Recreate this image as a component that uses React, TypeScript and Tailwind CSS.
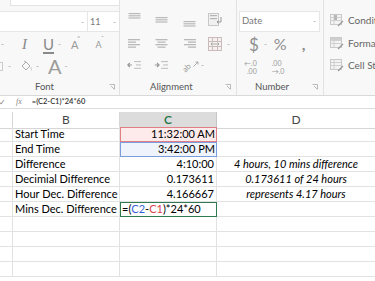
import React from "react";

const Dash = ({ className = "" }: { className?: string }) => (
  <span className={`text-[8px] leading-none text-[#9a9a9a] ${className}`}>-</span>
);

const Launcher = () => (
  <svg width="6" height="6" viewBox="0 0 6 6" className="text-[#aaa]">
    <path d="M0.5 0.5H5.5V5.5" fill="none" stroke="currentColor" strokeWidth="0.8" />
    <path d="M2 2L5 5" stroke="currentColor" strokeWidth="0.8" />
  </svg>
);

// horizontal line icons used by the alignment buttons
const Lines = ({ rows, widths, top = 0 }: { rows: number; widths: number[]; top?: number }) => (
  <svg width="13" height="14" viewBox="0 0 13 14">
    {Array.from({ length: rows }).map((_, i) => (
      <rect key={i} x={(13 - widths[i]) / 2} y={top + i * 2.2} width={widths[i]} height="1.2" fill="#b9b9b9" />
    ))}
  </svg>
);

const AlignIcon = ({ side }: { side: "left" | "center" | "right" }) => {
  const ws = [12, 8, 12, 8];
  return (
    <svg width="13" height="10" viewBox="0 0 13 10">
      {ws.map((w, i) => {
        const x = side === "left" ? 0 : side === "right" ? 13 - w : (13 - w) / 2;
        return <rect key={i} x={x} y={i * 2.5} width={w} height="1.3" fill="#b9b9b9" />;
      })}
    </svg>
  );
};

const Font = () => (
  <div className="flex w-[120px] shrink-0 flex-col border-r border-[#e2e2e2]">
    <div className="ml-[10px] h-[6px] border-b border-l border-[#e3e3e3] bg-white" />
    <div className="mt-[5px] flex h-[21px] border-y border-[#e6e6e6] bg-white">
      <div className="flex w-[87px] items-center justify-end pr-[3px]">
        <Dash />
      </div>
      <div className="flex flex-1 items-center border-l border-[#e6e6e6] pl-[2px] text-[9px] text-[#777]">
        <span>11</span>
        <span className="ml-auto pr-[3px]">
          <Dash />
        </span>
      </div>
    </div>
    <div className="mt-[4px] flex h-[16px] items-center text-[#888]">
      <Dash className="ml-[1px]" />
      <span className="ml-[18px] font-['Liberation_Serif'] text-[15px] italic leading-none text-[#888]">I</span>
      <span className="ml-[16px] text-[15px] leading-none text-[#8a8a8a] underline decoration-[1.5px] underline-offset-2">U</span>
      <Dash className="ml-[4px]" />
      <span className="relative ml-[10px] text-[11px] leading-none text-[#999]">
        A<span className="absolute -right-[2px] -top-[4px] text-[6px]">^</span>
      </span>
      <span className="relative ml-[17px] text-[9px] leading-none text-[#999]">
        A<span className="absolute -right-[2px] -top-[5px] text-[6px]">ˇ</span>
      </span>
    </div>
    <div className="mt-[5px] flex h-[18px] items-center">
      <div className="h-[9px] w-[3px] border-y border-r border-[#ccc]" />
      <Dash className="ml-[5px]" />
      <svg width="13" height="12" viewBox="0 0 13 12" className="ml-[9px]">
        <path d="M2 6L6 2L10 6L6 10Z" fill="none" stroke="#aaa" strokeWidth="1" />
        <path d="M4 1L6 2" stroke="#aaa" />
        <path d="M11 7C11 9 12 10 11.5 10.5" stroke="#ccc" fill="none" />
      </svg>
      <Dash className="ml-[3px]" />
      <span className="ml-[9px] text-[20px] leading-none text-[#9b9b9b]">A</span>
      <Dash className="ml-[3px]" />
    </div>
    <div className="mt-auto flex h-[14px] items-center pb-[2px]">
      <span className="ml-[35px] text-[9.5px] text-[#555]">Font</span>
      <span className="ml-auto mr-[4px]">
        <Launcher />
      </span>
    </div>
  </div>
);

const Alignment = () => (
  <div className="flex w-[117px] shrink-0 flex-col border-r border-[#e2e2e2]">
    <div className="mt-[13px] flex h-[16px] items-start pl-[8px]">
      <Lines rows={3} widths={[12, 12, 12]} />
      <span className="ml-[14px] mt-[4px]">
        <Lines rows={3} widths={[12, 12, 12]} />
      </span>
      <span className="ml-[15px] mt-[8px]">
        <Lines rows={3} widths={[12, 12, 12]} />
      </span>
      <svg width="15" height="14" viewBox="0 0 15 14" className="ml-[12px]">
        <rect x="0.5" y="0.5" width="10" height="12" fill="#f0f0f0" stroke="#c8c8c8" />
        <rect x="2" y="2" width="7" height="1.2" fill="#b5b5b5" />
        <rect x="2" y="5" width="7" height="1.2" fill="#b5b5b5" />
        <path d="M13 4V9H9M10.5 7.5L9 9L10.5 10.5" fill="none" stroke="#999" strokeWidth="1" />
      </svg>
    </div>
    <div className="mt-[7px] flex h-[16px] items-center pl-[8px]">
      <AlignIcon side="left" />
      <span className="ml-[14px]">
        <AlignIcon side="center" />
      </span>
      <span className="ml-[15px]">
        <AlignIcon side="right" />
      </span>
      <svg width="14" height="14" viewBox="0 0 14 14" className="ml-[12px]">
        <rect x="0.5" y="0.5" width="13" height="13" fill="#f5f0f0" stroke="#cbb" />
        <path d="M0.5 4.5H13.5M0.5 9.5H13.5M4.5 0.5V4.5M9.5 0.5V4.5M4.5 9.5V13.5M9.5 9.5V13.5" stroke="#cbb" />
        <path d="M3 7H11M4.5 5.5L3 7L4.5 8.5M9.5 5.5L11 7L9.5 8.5" fill="none" stroke="#999" strokeWidth="0.8" />
      </svg>
      <Dash className="ml-[5px]" />
    </div>
    <div className="mt-[5px] flex h-[16px] items-center pl-[7px] text-[#aaa]">
      <svg width="14" height="10" viewBox="0 0 14 10">
        <path d="M5 5H0.8M2.8 3L0.8 5L2.8 7" fill="none" stroke="#999" strokeWidth="1.2" />
        <rect x="7" y="1" width="7" height="1.1" fill="#c2c2c2" />
        <rect x="9" y="4.4" width="5" height="1.1" fill="#c2c2c2" />
        <rect x="7" y="7.8" width="7" height="1.1" fill="#c2c2c2" />
      </svg>
      <svg width="14" height="10" viewBox="0 0 14 10" className="ml-[13px]">
        <path d="M0.8 5H5M3 3L5 5L3 7" fill="none" stroke="#999" strokeWidth="1.2" />
        <rect x="7" y="1" width="7" height="1.1" fill="#c2c2c2" />
        <rect x="9" y="4.4" width="5" height="1.1" fill="#c2c2c2" />
        <rect x="7" y="7.8" width="7" height="1.1" fill="#c2c2c2" />
      </svg>
      <span className="relative ml-[13px] inline-block w-[16px] -rotate-45 text-[8px] leading-none text-[#999]">
        ab
      </span>
      <svg width="6" height="6" viewBox="0 0 6 6" className="-ml-[4px] -mt-[2px]">
        <path d="M0.5 5.5L5 1M2.5 1H5V3.5" fill="none" stroke="#999" strokeWidth="0.8" />
      </svg>
      <Dash className="ml-[2px]" />
    </div>
    <div className="mt-auto flex h-[14px] items-center pb-[2px]">
      <span className="ml-[30px] text-[9.5px] text-[#555]">Alignment</span>
      <span className="ml-auto mr-[5px]">
        <Launcher />
      </span>
    </div>
  </div>
);

const NumberGroup = () => (
  <div className="flex w-[87px] shrink-0 flex-col border-r border-[#e2e2e2]">
    <div className="ml-[2px] mr-[3px] mt-[11px] flex h-[21px] items-center border border-[#e6e6e6] bg-white pl-[2px] pr-[3px] text-[9.5px] text-[#777]">
      <span>Date</span>
      <span className="ml-auto">
        <Dash />
      </span>
    </div>
    <div className="mt-[2px] flex h-[20px] items-center text-[#8f8f8f]">
      <span className="ml-[12px] text-[17px] leading-none">$</span>
      <Dash className="ml-[5px]" />
      <span className="ml-[7px] text-[16px] leading-none">%</span>
      <span className="ml-[15px] text-[16px] font-bold leading-none">,</span>
    </div>
    <div className="mt-[3px] flex h-[20px] items-center text-[7px] leading-[8px] text-[#999]">
      <div className="ml-[7px] flex flex-col items-end">
        <span>←.0</span>
        <span>.00</span>
      </div>
      <div className="ml-[15px] flex flex-col items-start">
        <span>.00</span>
        <span>→.0</span>
      </div>
    </div>
    <div className="mt-auto flex h-[14px] items-center pb-[2px]">
      <span className="ml-[18px] text-[9.5px] text-[#555]">Number</span>
      <span className="ml-auto mr-[5px]">
        <Launcher />
      </span>
    </div>
  </div>
);

const StyleIcon = ({ kind }: { kind: number }) => (
  <svg width="14" height="13" viewBox="0 0 14 13" className="shrink-0">
    <rect x="0.5" y="0.5" width="11" height="10" fill="#f3f3f3" stroke="#c9c9c9" />
    <path d="M0.5 3.5H11.5M0.5 6.5H11.5M4 0.5V10.5" stroke="#d0d0d0" />
    {kind === 0 && <rect x="4" y="1" width="3" height="5" fill="#b8b8b8" />}
    {kind === 1 && <rect x="1" y="1" width="10" height="2.5" fill="#cfcfcf" />}
    <path d="M8 12L13 7" stroke="#999" strokeWidth="1.3" />
  </svg>
);

const Styles = () => (
  <div className="flex min-w-0 flex-1 flex-col overflow-hidden pl-[6px] text-[10px] text-[#666]">
    <div className="mt-[13px] flex h-[14px] items-center gap-[4px]">
      <StyleIcon kind={0} />
      <span className="whitespace-nowrap">Conditional</span>
    </div>
    <div className="mt-[9px] flex h-[14px] items-center gap-[4px]">
      <StyleIcon kind={1} />
      <span className="whitespace-nowrap">Format as</span>
    </div>
    <div className="mt-[8px] flex h-[14px] items-center gap-[4px]">
      <StyleIcon kind={2} />
      <span className="whitespace-nowrap">Cell Styles</span>
    </div>
  </div>
);

const grid = "border-b border-r border-[#e2e2e2]";

const rows: { b: string; c: string; d: string }[] = [
  { b: "Start Time", c: "11:32:00 AM", d: "" },
  { b: "End Time", c: "3:42:00 PM", d: "" },
  { b: "Difference", c: "4:10:00", d: "4 hours, 10 mins difference" },
  { b: "Decimial Difference", c: "0.173611", d: "0.173611 of 24 hours" },
  { b: "Hour Dec. Difference", c: "4.166667", d: "represents 4.17 hours" },
  { b: "Mins Dec. Difference", c: "", d: "" },
  { b: "", c: "", d: "" },
  { b: "", c: "", d: "" },
  { b: "", c: "", d: "" },
  { b: "", c: "", d: "" },
];

export default function App() {
  return (
    <div className="h-[281px] w-[375px] overflow-hidden bg-white font-['Lato',sans-serif] text-black">
      {/* ribbon */}
      <div className="flex h-[96px] border-b border-[#d9d9d9] bg-[#f8f8f8]">
        <Font />
        <Alignment />
        <NumberGroup />
        <Styles />
      </div>

      {/* formula bar */}
      <div className="flex h-[13px] items-center border-b border-[#dcdcdc] bg-white">
        <span className="-ml-[1px] text-[8px] text-[#777]">✓</span>
        <span className="ml-[10px] font-['Liberation_Serif'] text-[8px] italic text-[#888]">fx</span>
        <span className="ml-[10px] text-[7.5px] font-semibold text-[#333]">=(C2-C1)*24*60</span>
      </div>

      {/* sheet */}
      <div className="mt-[3px] grid grid-cols-[13px_107px_97px_1fr] auto-rows-[15px] text-[11px]">
        <div className="h-[17px] border-b border-r border-[#d6d6d6] bg-white" />
        <div className="flex h-[17px] items-center justify-center border-b border-r border-[#d6d6d6] text-[12px] text-[#444]">
          B
        </div>
        <div className="flex h-[17px] items-center justify-center border-b border-r border-b-[#cfcfcf] border-r-[#c6c6c6] bg-[#dcdcdc] text-[12px] font-semibold text-[#217346]">
          C
        </div>
        <div className="flex h-[17px] items-center justify-center border-b border-[#d6d6d6] text-[12px] text-[#444]">
          D
        </div>

        {rows.map((r, i) => (
          <React.Fragment key={i}>
            <div className={grid} />
            <div className={`${grid} flex items-center whitespace-nowrap pl-[2px]`}>{r.b}</div>
            {i === 0 ? (
              <div className="flex items-center justify-end border border-[#e27f85] bg-[#fdebeb] pr-[1px]">{r.c}</div>
            ) : i === 1 ? (
              <div className="flex items-center justify-end border border-[#7c9ddd] bg-[#eef3fc] pr-[1px]">{r.c}</div>
            ) : i === 5 ? (
              <div className="flex items-center border-[1.5px] border-[#2f7a50] pl-[1px]">
                =(<span className="text-[#3a64d8]">C2</span>-<span className="text-[#d6454b]">C1</span>)*24*60
              </div>
            ) : (
              <div className={`${grid} flex items-center justify-end pr-[2px]`}>{r.c}</div>
            )}
            <div className="flex items-center justify-center whitespace-nowrap border-b border-[#e2e2e2] italic">
              {r.d}
            </div>
          </React.Fragment>
        ))}
      </div>
    </div>
  );
}
